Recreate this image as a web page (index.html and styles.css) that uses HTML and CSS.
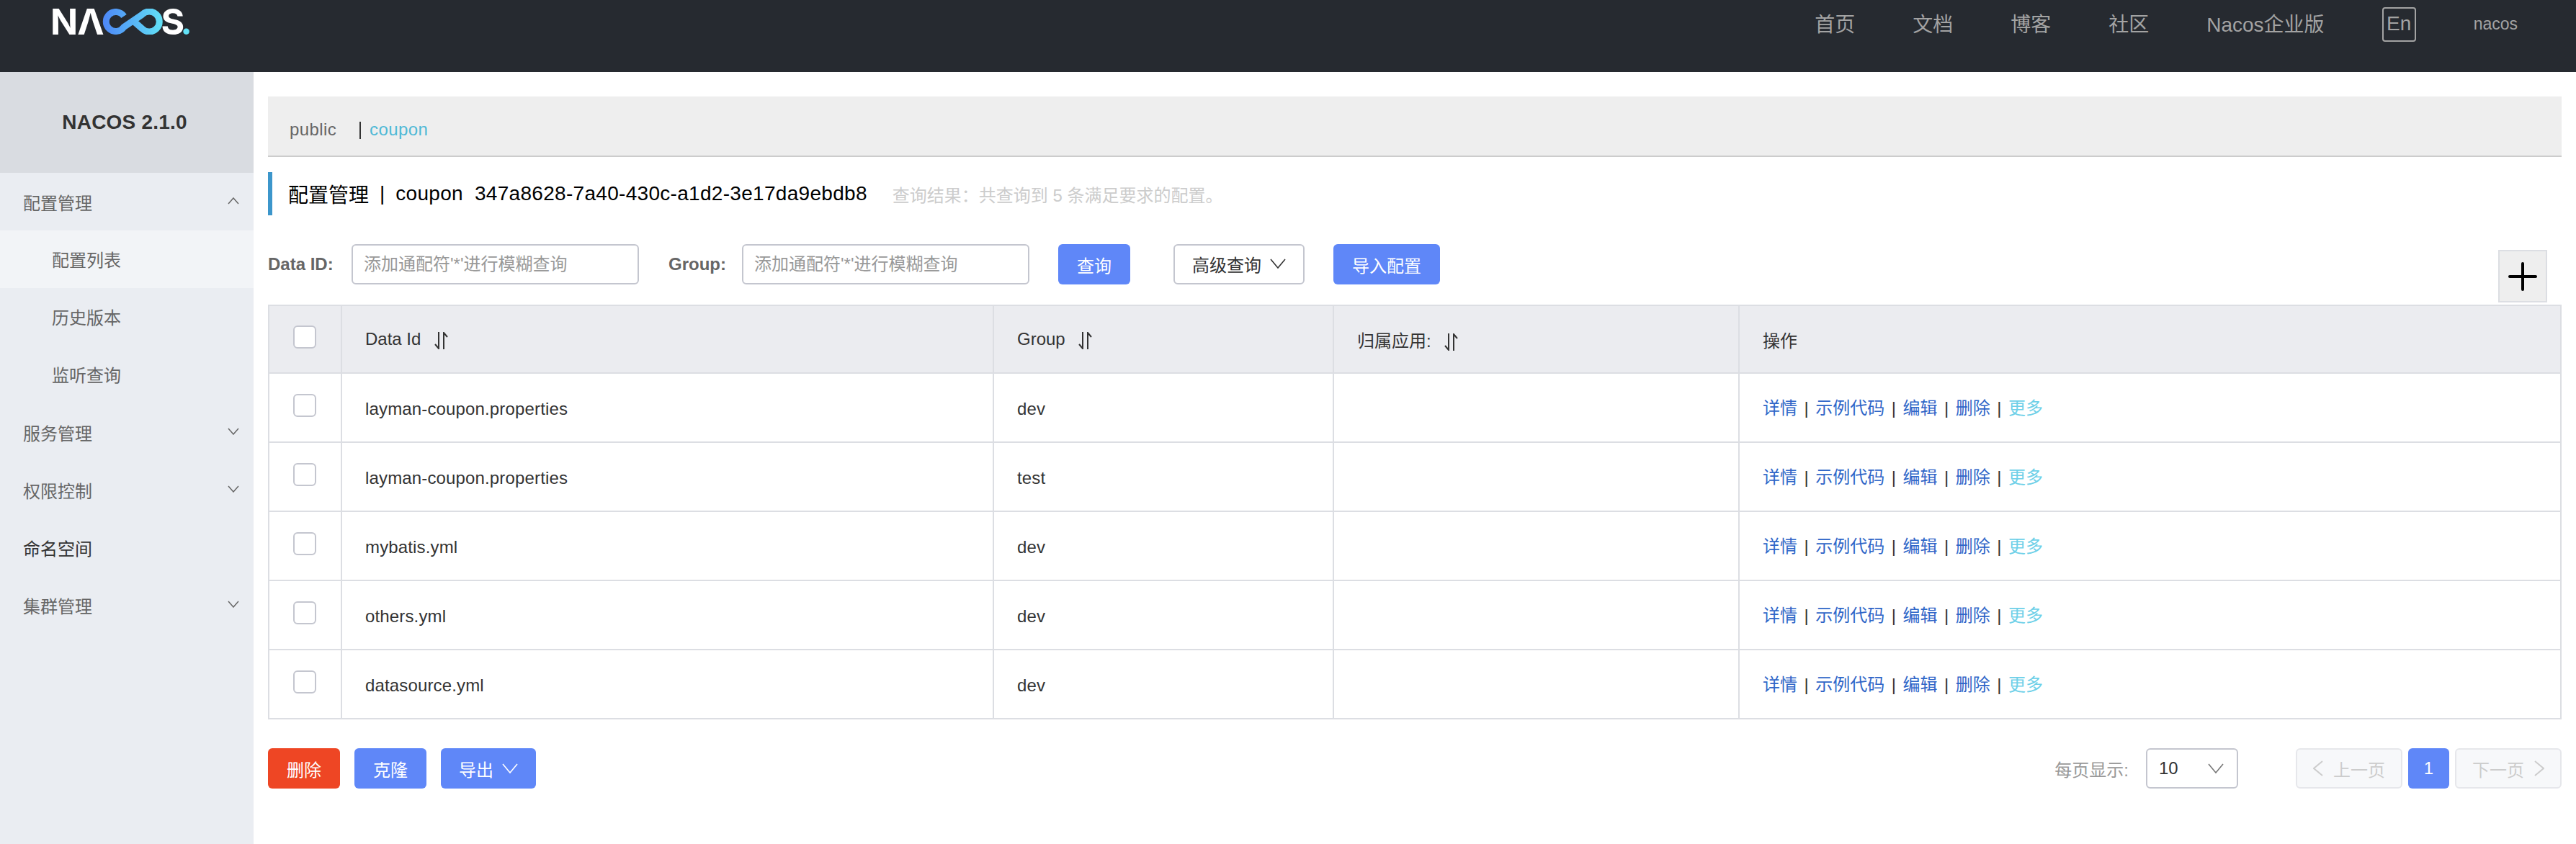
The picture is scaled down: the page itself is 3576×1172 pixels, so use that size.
FILE: index.html
```html
<!DOCTYPE html>
<html lang="zh-CN">
<head>
  <meta charset="UTF-8">
  <title>Nacos</title>
  <link rel="stylesheet" href="styles.css">
</head>
<body>
  <header class="topbar">
    <div class="logo">
      <span class="logo-n">N</span><span class="logo-a">Λ</span>
      <svg class="logo-loop" width="84" height="36" viewBox="0 0 84 36">
        <defs>
          <linearGradient id="loopGrad" gradientUnits="userSpaceOnUse" x1="0" y1="0" x2="84" y2="0">
            <stop offset="0" stop-color="#4d86f7"/>
            <stop offset="1" stop-color="#62e2f6"/>
          </linearGradient>
        </defs>
        <path d="M30 10.5A13.5 13.5 0 1 0 30 25.5L55 8.5A14 14 0 1 1 55 27.5L43 17" fill="none" stroke="url(#loopGrad)" stroke-width="9"/>
      </svg>
      <span class="logo-s">S</span><span class="logo-dot">.</span>
    </div>
    <nav class="topnav">
      <a>首页</a>
      <a>文档</a>
      <a>博客</a>
      <a>社区</a>
      <a>Nacos企业版</a>
      <a class="lang">En</a>
      <a class="user">nacos</a>
    </nav>
  </header>

  <div class="layout">
    <aside class="sidebar">
      <div class="side-title">NACOS 2.1.0</div>
      <div class="side-item">配置管理
        <svg class="side-arrow" width="16" height="10" viewBox="0 0 16 10"><path d="M1 9L8 1L15 9" fill="none" stroke="#666" stroke-width="1.5"/></svg>
      </div>
      <div class="side-sub active">配置列表</div>
      <div class="side-sub">历史版本</div>
      <div class="side-sub">监听查询</div>
      <div class="side-item">服务管理
        <svg class="side-arrow" width="16" height="10" viewBox="0 0 16 10"><path d="M1 1L8 9L15 1" fill="none" stroke="#666" stroke-width="1.5"/></svg>
      </div>
      <div class="side-item">权限控制
        <svg class="side-arrow" width="16" height="10" viewBox="0 0 16 10"><path d="M1 1L8 9L15 1" fill="none" stroke="#666" stroke-width="1.5"/></svg>
      </div>
      <div class="side-item dark">命名空间</div>
      <div class="side-item">集群管理
        <svg class="side-arrow" width="16" height="10" viewBox="0 0 16 10"><path d="M1 1L8 9L15 1" fill="none" stroke="#666" stroke-width="1.5"/></svg>
      </div>
    </aside>

    <main class="content">
      <div class="ns-bar">
        <span class="ns-public">public</span>
        <span class="ns-sep"></span>
        <span class="ns-active">coupon</span>
      </div>

      <div class="title-bar">
        <span>配置管理</span>
        <span class="title-sep">|</span>
        <span class="title-latin">coupon</span>
        <span class="title-id title-latin">347a8628-7a40-430c-a1d2-3e17da9ebdb8</span>
        <span class="title-hint">查询结果：共查询到 5 条满足要求的配置。</span>
      </div>

      <div class="toolbar">
        <label class="field-label label-id">Data ID:</label>
        <input class="field-input" type="text" placeholder="添加通配符'*'进行模糊查询">
        <label class="field-label label-group">Group:</label>
        <input class="field-input" type="text" placeholder="添加通配符'*'进行模糊查询">
        <button class="btn btn-primary btn-query">查询</button>
        <button class="btn btn-normal btn-advanced">高级查询
          <svg width="22" height="14" viewBox="0 0 22 14"><path d="M1 1L11 13L21 1" fill="none" stroke="#333" stroke-width="1.6"/></svg>
        </button>
        <button class="btn btn-primary btn-import">导入配置</button>
        <div class="add-box">
          <svg width="40" height="40" viewBox="0 0 40 40"><path d="M20 2V38M2 20H38" fill="none" stroke="#000" stroke-width="4" stroke-linecap="round"/></svg>
        </div>
      </div>

      <table class="config-table">
        <colgroup>
          <col class="col-check"><col class="col-id"><col class="col-group"><col class="col-app"><col>
        </colgroup>
        <thead>
          <tr>
            <th class="check-cell"><span class="check"></span></th>
            <th>Data Id
              <svg class="sort" width="20" height="24" viewBox="0 0 20 24"><path d="M7 0V23L2 17M14 24V1L19 7" fill="none" stroke="#333" stroke-width="2"/></svg>
            </th>
            <th>Group
              <svg class="sort" width="20" height="24" viewBox="0 0 20 24"><path d="M7 0V23L2 17M14 24V1L19 7" fill="none" stroke="#333" stroke-width="2"/></svg>
            </th>
            <th>归属应用:
              <svg class="sort" width="20" height="24" viewBox="0 0 20 24"><path d="M7 0V23L2 17M14 24V1L19 7" fill="none" stroke="#333" stroke-width="2"/></svg>
            </th>
            <th>操作</th>
          </tr>
        </thead>
        <tbody>
          <tr>
            <td class="check-cell"><span class="check"></span></td>
            <td>layman-coupon.properties</td>
            <td>dev</td>
            <td></td>
            <td class="actions"><a>详情</a><i>|</i><a>示例代码</a><i>|</i><a>编辑</a><i>|</i><a>删除</a><i>|</i><a class="more">更多</a></td>
          </tr>
          <tr>
            <td class="check-cell"><span class="check"></span></td>
            <td>layman-coupon.properties</td>
            <td>test</td>
            <td></td>
            <td class="actions"><a>详情</a><i>|</i><a>示例代码</a><i>|</i><a>编辑</a><i>|</i><a>删除</a><i>|</i><a class="more">更多</a></td>
          </tr>
          <tr>
            <td class="check-cell"><span class="check"></span></td>
            <td>mybatis.yml</td>
            <td>dev</td>
            <td></td>
            <td class="actions"><a>详情</a><i>|</i><a>示例代码</a><i>|</i><a>编辑</a><i>|</i><a>删除</a><i>|</i><a class="more">更多</a></td>
          </tr>
          <tr>
            <td class="check-cell"><span class="check"></span></td>
            <td>others.yml</td>
            <td>dev</td>
            <td></td>
            <td class="actions"><a>详情</a><i>|</i><a>示例代码</a><i>|</i><a>编辑</a><i>|</i><a>删除</a><i>|</i><a class="more">更多</a></td>
          </tr>
          <tr>
            <td class="check-cell"><span class="check"></span></td>
            <td>datasource.yml</td>
            <td>dev</td>
            <td></td>
            <td class="actions"><a>详情</a><i>|</i><a>示例代码</a><i>|</i><a>编辑</a><i>|</i><a>删除</a><i>|</i><a class="more">更多</a></td>
          </tr>
        </tbody>
      </table>

      <div class="table-footer">
        <div class="bulk-actions">
          <button class="btn btn-danger btn-small">删除</button>
          <button class="btn btn-primary btn-small">克隆</button>
          <button class="btn btn-primary btn-export">导出
            <svg width="22" height="14" viewBox="0 0 22 14"><path d="M1 1L11 13L21 1" fill="none" stroke="#fff" stroke-width="1.6"/></svg>
          </button>
        </div>
        <div class="pager">
          <span class="page-size-label">每页显示:</span>
          <div class="page-size">
            <span>10</span>
            <svg width="22" height="14" viewBox="0 0 22 14"><path d="M1 1L11 13L21 1" fill="none" stroke="#777" stroke-width="1.6"/></svg>
          </div>
          <button class="page-btn page-prev">
            <svg width="14" height="22" viewBox="0 0 14 22"><path d="M13 1L1 11L13 21" fill="none" stroke="#ccc" stroke-width="2"/></svg>
            上一页
          </button>
          <button class="page-num">1</button>
          <button class="page-btn">下一页
            <svg width="14" height="22" viewBox="0 0 14 22"><path d="M1 1L13 11L1 21" fill="none" stroke="#ccc" stroke-width="2"/></svg>
          </button>
        </div>
      </div>
    </main>
  </div>
</body>
</html>
```

FILE: styles.css
```css
/* Global */
* {
  box-sizing: border-box;
}

html, body {
  height: 100%;
}

body {
  margin: 0;
  display: flex;
  flex-direction: column;
  min-height: 100vh;
  overflow: hidden;
  background-color: #fff;
  color: #333;
  font-family: "Liberation Sans", "Noto Sans CJK SC", sans-serif;
  font-size: 24px;
}

button, input {
  font-family: inherit;
  font-size: 24px;
}

/* Top bar */
.topbar {
  height: 100px;
  flex-shrink: 0;
  display: flex;
  justify-content: space-between;
  align-items: flex-start;
  padding: 0 81px 0 70px;
  background-color: #262a30;
}

.logo {
  display: flex;
  align-items: flex-start;
  height: 36px;
  margin-top: 12px;
  font-family: Inter, sans-serif;
  font-size: 50px;
  font-weight: 700;
  line-height: 36px;
  color: #fff;
}

.logo-a {
  margin-left: -1px;
}

.logo-loop {
  flex-shrink: 0;
  margin-left: -2px;
}

.logo-s {
  margin-left: -3px;
}

.logo-dot {
  margin-left: -6px;
  color: #62e2f6;
}

.topnav {
  display: flex;
  gap: 80px;
  align-items: center;
  height: 68px;
  font-size: 28px;
  color: #a3a3a3;
}

.topnav a {
  margin-bottom: 4px;
}

.topnav .lang {
  width: 47px;
  height: 48px;
  margin-bottom: 0;
  border: 2px solid #a3a3a3;
  border-radius: 4px;
  text-align: center;
  line-height: 42px;
}

.topnav .user {
  margin-bottom: 2px;
  font-size: 23px;
}

/* Layout */
.layout {
  flex: 1;
  display: flex;
  min-height: 0;
}

.sidebar {
  width: 352px;
  flex-shrink: 0;
  background-color: #eaedf2;
  color: #666;
}

.side-title {
  height: 140px;
  padding-right: 6px;
  background-color: #d9dce1;
  color: #333;
  font-size: 28px;
  font-weight: 700;
  letter-spacing: 0.2px;
  text-align: center;
  line-height: 140px;
}

.side-item {
  height: 80px;
  padding: 0 20px 0 32px;
  display: flex;
  justify-content: space-between;
  align-items: center;
}

.side-item.dark {
  color: #333;
}

.side-sub {
  height: 80px;
  padding-left: 72px;
  line-height: 83px;
}

.side-sub.active {
  background-color: #f2f4f7;
}

.side-arrow {
  margin-top: -2px;
}

/* Main content */
.content {
  flex: 1;
  min-width: 0;
  padding: 34px 20px 0;
}

.ns-bar {
  height: 84px;
  padding: 30px 0 0 30px;
  display: flex;
  align-items: flex-start;
  background-color: #eee;
  border-bottom: 2px solid #ccc;
  color: #666;
  letter-spacing: 0.4px;
  line-height: 32px;
}

.ns-sep {
  width: 2px;
  height: 24px;
  margin: 5px 12px 0 32px;
  background-color: #333;
}

.ns-active {
  color: #4fb9d6;
}

.title-bar {
  height: 60px;
  margin-top: 21px;
  padding-left: 22px;
  display: flex;
  align-items: center;
  border-left: 6px solid #3c96cb;
  color: #000;
  font-size: 28px;
}

.title-sep {
  margin: 0 15px;
}

.title-latin {
  letter-spacing: 0.3px;
}

.title-id {
  margin-left: 16px;
}

.title-hint {
  margin-left: 35px;
  font-size: 24px;
  color: #ccc;
}

/* Search toolbar */
.toolbar {
  position: relative;
  height: 56px;
  margin-top: 40px;
  display: flex;
  align-items: center;
}

.field-label {
  font-weight: 700;
  color: #666;
}

.label-id {
  width: 116px;
}

.label-group {
  width: 102px;
  margin-left: 41px;
}

.field-input {
  width: 399px;
  height: 56px;
  padding: 0 15px;
  border: 2px solid #c4c6cf;
  border-radius: 6px;
  outline: none;
  color: #333;
}

.field-input::placeholder {
  color: #999;
  opacity: 1;
}

.btn {
  height: 56px;
  padding: 0;
  border: none;
  border-radius: 6px;
  display: inline-flex;
  justify-content: center;
  align-items: center;
  gap: 12px;
  cursor: pointer;
}

.btn-primary {
  background-color: #5f87f8;
  color: #fff;
}

.btn-danger {
  background-color: #ee4624;
  color: #fff;
}

.btn-normal {
  border: 2px solid #c4c6cf;
  background-color: #fff;
  color: #333;
}

.btn-query {
  width: 100px;
  margin-left: 40px;
}

.btn-advanced {
  width: 182px;
  margin-left: 60px;
  padding-bottom: 2px;
}

.btn-import {
  width: 148px;
  margin-left: 40px;
}

.add-box {
  position: absolute;
  top: 8px;
  right: 20px;
  width: 68px;
  height: 73px;
  display: flex;
  justify-content: center;
  align-items: center;
  border: 2px solid #dcdee3;
  background-color: #eee;
}

/* Table */
.config-table {
  width: 3184px;
  margin-top: 28px;
  table-layout: fixed;
  border-collapse: collapse;
}

.col-check { width: 101px; }
.col-id { width: 905px; }
.col-group { width: 472px; }
.col-app { width: 563px; }

.config-table th,
.config-table td {
  height: 96px;
  padding: 4px 0 0 32px;
  border: 2px solid #dcdee3;
  font-weight: 400;
  letter-spacing: 0.15px;
  text-align: left;
}

.config-table th {
  height: 94px;
  padding-top: 0;
  letter-spacing: 0;
  background-color: #ebecf0;
}

.config-table .check-cell {
  padding: 0 0 6px 33px;
}

.check {
  display: block;
  width: 32px;
  height: 32px;
  border: 2px solid #c4c6cf;
  border-radius: 6px;
  background-color: #fff;
}

.sort {
  margin-left: 11px;
  vertical-align: middle;
}

.config-table td.actions {
  padding: 0 0 4px 32px;
  letter-spacing: 0;
}

.actions a {
  color: #2f66c8;
}

.actions a.more {
  color: #6ed0e8;
}

.actions i {
  margin: 0 9.5px;
  font-style: normal;
}

/* Footer */
.table-footer {
  margin-top: 40px;
  display: flex;
  justify-content: space-between;
}

.bulk-actions {
  display: flex;
  gap: 20px;
}

.btn-small {
  width: 100px;
}

.btn-export {
  width: 132px;
}

.pager {
  display: flex;
  align-items: center;
}

.page-size-label {
  color: #999;
}

.page-size {
  width: 128px;
  height: 56px;
  margin: 0 80px 0 24px;
  padding: 0 18px 0 16px;
  display: flex;
  justify-content: space-between;
  align-items: center;
  border: 2px solid #c4c6cf;
  border-radius: 6px;
}

.page-btn {
  width: 148px;
  height: 56px;
  padding: 0;
  display: flex;
  justify-content: center;
  align-items: center;
  gap: 14px;
  border: 2px solid #e6e7eb;
  border-radius: 6px;
  background-color: #f7f8fa;
  color: #ccc;
}

.page-num {
  width: 57px;
  height: 56px;
  margin: 0 8px;
  padding: 0;
  border: none;
  border-radius: 6px;
  background-color: #5f87f8;
  color: #fff;
}
```
